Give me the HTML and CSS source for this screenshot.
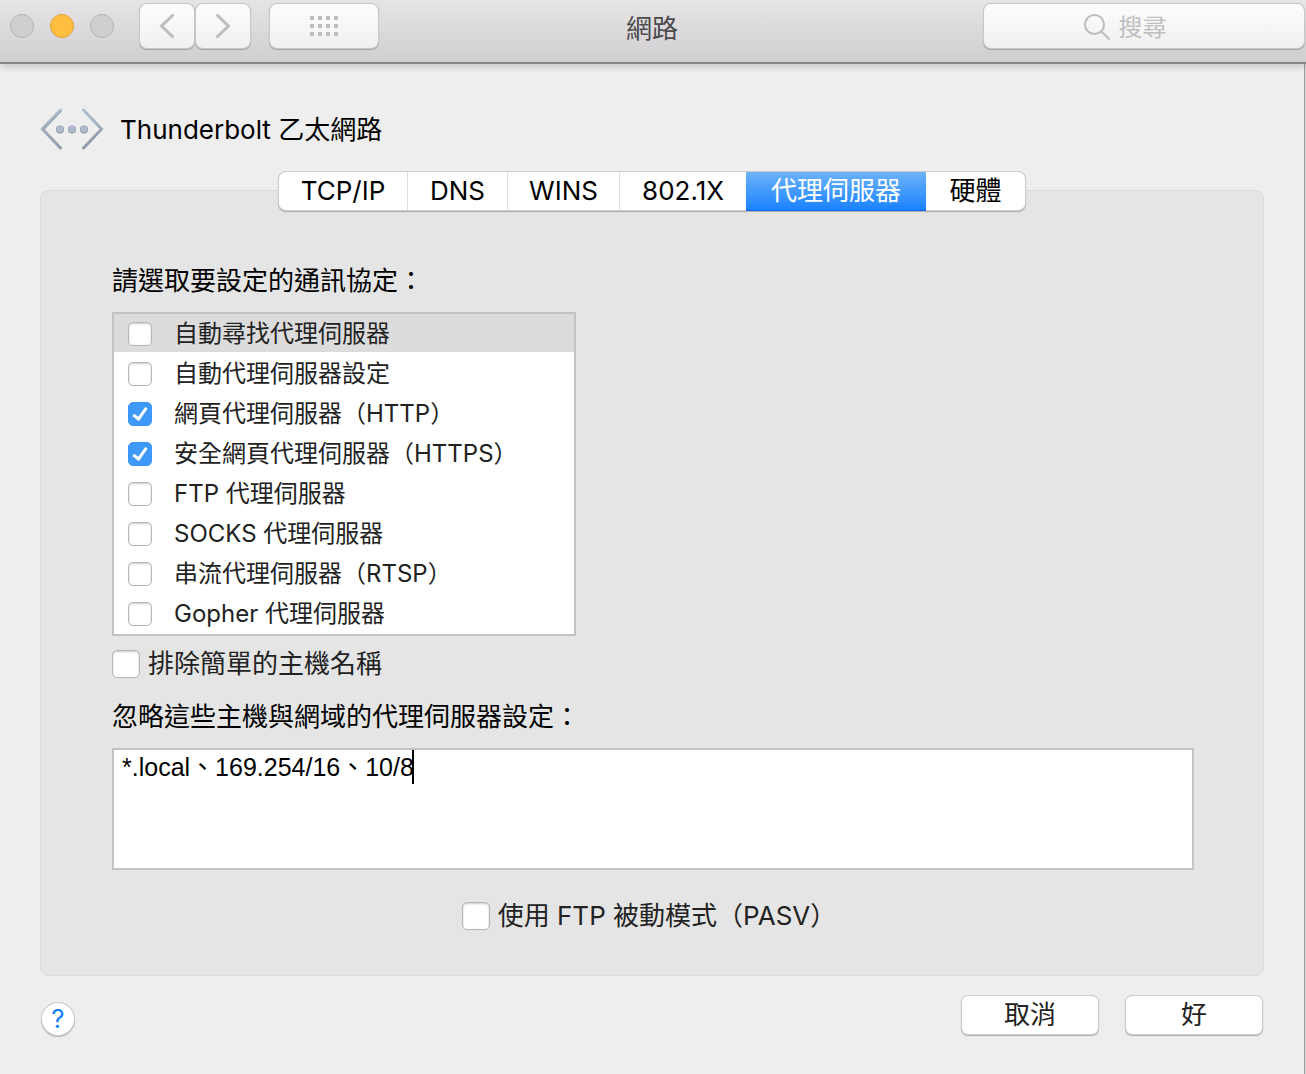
FILE: index.html
```html
<!DOCTYPE html>
<html lang="zh-Hant-TW">
<head>
    <meta charset="UTF-8">
    <meta name="viewport" content="width=device-width, initial-scale=1.0">
    <title>網路</title>
    <link rel="stylesheet" href="styles.css">
</head>
<body>

<header class="titlebar">
    <div class="titlebar-left">
        <div class="lights">
            <button class="light" type="button" aria-label="關閉"></button>
            <button class="light light-min" type="button" aria-label="縮到最小"></button>
            <button class="light" type="button" aria-label="縮放"></button>
        </div>
        <div class="nav">
            <button class="tool-btn" type="button" aria-label="返回">
                <svg width="16" height="26" viewBox="0 0 16 26"><path d="M13.500 2.500L2.500 13L13.500 23.500"/></svg>
            </button>
            <button class="tool-btn" type="button" aria-label="向前">
                <svg width="16" height="26" viewBox="0 0 16 26"><path d="M2.500 2.500L13.500 13L2.500 23.500"/></svg>
            </button>
        </div>
        <button class="tool-btn tool-btn-wide" type="button" aria-label="顯示全部">
            <svg class="dots" width="28" height="20" viewBox="0 0 28 20">
                <path d="M0 0h4v4H0zM8 0h4v4H8zM16 0h4v4h-4zM24 0h4v4h-4zM0 8h4v4H0zM8 8h4v4H8zM16 8h4v4h-4zM24 8h4v4h-4zM0 16h4v4H0zM8 16h4v4H8zM16 16h4v4h-4zM24 16h4v4h-4z"/>
            </svg>
        </button>
    </div>
    <h1>網路</h1>
    <label class="search">
        <svg width="26" height="26" viewBox="0 0 26 26"><circle cx="10.500" cy="10.500" r="9.500"/><path d="M17.200 17.200L25 25"/></svg>
        <input type="search" placeholder="搜尋" aria-label="搜尋">
    </label>
</header>

<main class="window">
    <div class="service">
        <svg width="64" height="42" viewBox="0 0 64 42">
            <defs>
                <linearGradient id="steel" x1="0" y1="0" x2="0" y2="42" gradientUnits="userSpaceOnUse">
                    <stop offset="0" stop-color="#b4bfcd"/>
                    <stop offset="1" stop-color="#8f9bab"/>
                </linearGradient>
            </defs>
            <path d="M20.500 2L2.500 21L20.500 40M43.500 2L61.500 21L43.500 40" fill="none" stroke="url(#steel)" stroke-width="3" stroke-linecap="round"/>
            <path d="M21.500 3L4 21.500M61.500 22L44.500 40" fill="none" stroke="#8791a0" stroke-width="1"/>
            <circle cx="20" cy="21.500" r="4" fill="#8b96a5"/>
            <circle cx="32" cy="21.500" r="4" fill="#8b96a5"/>
            <circle cx="44" cy="21.500" r="4" fill="#8b96a5"/>
            <circle cx="20" cy="21" r="3.500" fill="#afbaca"/>
            <circle cx="32" cy="21" r="3.500" fill="#afbaca"/>
            <circle cx="44" cy="21" r="3.500" fill="#afbaca"/>
        </svg>
        <h2>Thunderbolt 乙太網路</h2>
    </div>

    <div class="tabs" role="tablist">
        <button type="button" role="tab">TCP/IP</button>
        <button type="button" role="tab">DNS</button>
        <button type="button" role="tab">WINS</button>
        <button type="button" role="tab">802.1X</button>
        <button type="button" role="tab" class="active" aria-selected="true">代理伺服器</button>
        <button type="button" role="tab">硬體</button>
    </div>

    <section class="panel">
        <p class="caption">請選取要設定的通訊協定：</p>
        <div class="protocols">
            <label class="selected"><input type="checkbox">自動尋找代理伺服器</label>
            <label><input type="checkbox">自動代理伺服器設定</label>
            <label><input type="checkbox" checked>網頁代理伺服器（HTTP）</label>
            <label><input type="checkbox" checked>安全網頁代理伺服器（HTTPS）</label>
            <label><input type="checkbox">FTP 代理伺服器</label>
            <label><input type="checkbox">SOCKS 代理伺服器</label>
            <label><input type="checkbox">串流代理伺服器（RTSP）</label>
            <label><input type="checkbox">Gopher 代理伺服器</label>
        </div>
        <label class="option"><input type="checkbox">排除簡單的主機名稱</label>

        <label class="caption" for="bypass">忽略這些主機與網域的代理伺服器設定：</label>
        <div class="bypass">
            <textarea id="bypass" spellcheck="false">*.local、169.254/16、10/8</textarea>
            <span class="caret"></span>
        </div>

        <label class="option option-center"><input type="checkbox">使用 FTP 被動模式（PASV）</label>
    </section>

    <footer class="actions">
        <button class="help" type="button" aria-label="輔助說明">?</button>
        <button class="btn" type="button">取消</button>
        <button class="btn" type="button">好</button>
    </footer>
</main>

</body>
</html>
```
FILE: styles.css
```css
* {
    box-sizing: border-box;
}
body {
    margin: 0;
    min-height: 100vh;
    display: flex;
    flex-direction: column;
    background: #d4d4d4;
    color: #000;
    font-family: Inter, "Noto Sans CJK TC", sans-serif;
    font-size: 26px;
    line-height: 40px;
}
button, input, textarea {
    font: inherit;
    color: inherit;
    margin: 0;
    padding: 0;
}
h1, h2, p {
    margin: 0;
    font-size: 26px;
    font-weight: 400;
}

/* Title bar */
.titlebar {
    position: relative;
    display: grid;
    grid-template-columns: 1fr auto 1fr;
    align-items: start;
    height: 64px;
    padding: 4px 2px 0 0;
    border-bottom: 2px solid #858386;
    background: linear-gradient(#e6e4e7, #d0ced1);
    box-shadow: 0 2px 8px rgba(0,0,0,0.2);
}
.titlebar-left {
    display: flex;
    align-items: center;
}
.titlebar h1 {
    padding-top: 5px;
    color: #4b4b4b;
}
.lights {
    display: flex;
    gap: 16px;
    margin: 0 26px 0 10px;
}
.light {
    width: 24px;
    height: 24px;
    border: 1px solid #b4b2b4;
    border-radius: 50%;
    background: #cfcfcf;
}
.light-min {
    border-color: #e0a038;
    background: #ffbe40;
}
.nav {
    display: flex;
    gap: 2px;
    margin-right: 20px;
}
.tool-btn, .search {
    display: flex;
    align-items: center;
    justify-content: center;
    height: 44px;
    border: 0;
    border-radius: 7px;
    background: linear-gradient(#fdfdfd, #f0f0f0);
    box-shadow: 0 0 0 1px #c9c7ca, 0 1px 1px 1px #a5a3a6;
}
.tool-btn {
    width: 54px;
}
.tool-btn-wide {
    width: 108px;
}
.tool-btn svg, .search svg {
    fill: none;
    stroke: #bdbdbd;
    stroke-width: 3;
    stroke-linecap: round;
}
.tool-btn .dots {
    fill: #bdbdbd;
    stroke: none;
}
.search {
    justify-self: end;
    width: 320px;
    padding-top: 2px;
    gap: 9px;
}
.search svg {
    stroke-width: 2;
}
.search input {
    width: 86px;
    height: 42px;
    border: 0;
    outline: 0;
    background: none;
    font-size: 24px;
    appearance: none;
}
.search input::placeholder {
    color: #bfbfbf;
}

/* Sheet */
.window {
    flex: 1;
    margin-right: 1px;
    padding: 44px 40px 0;
    border-right: 1px solid #a0a0a0;
    background: #eee;
}
.service {
    display: flex;
    align-items: center;
    gap: 16px;
    height: 42px;
}
.service h2 {
    padding-top: 2px;
}
.tabs {
    position: relative;
    display: grid;
    grid-template-columns: 128px 100px 112px 127px 180px 99px;
    width: max-content;
    height: 38px;
    margin: 22px auto 0;
    border-radius: 7px;
    background: #fff;
    box-shadow: 0 0 0 1px #ccc, 0 1px 1px 1px #aaa;
}
.tabs button {
    border: 0;
    border-left: 1px solid #dcdcdc;
    background: none;
    line-height: 38px;
}
.tabs button:first-child, .tabs .active, .tabs .active + button {
    border-left: 0;
}
.tabs .active {
    background: linear-gradient(#6cb3fa, #1a82ff);
    box-shadow: 0 1px 0 #1168ee;
    color: #fff;
}
.panel {
    display: flex;
    flex-direction: column;
    align-items: flex-start;
    margin-top: -20px;
    padding: 70px 69px 39px 71px;
    border: 1px solid #dcdcdc;
    border-radius: 8px;
    background: #e5e5e5;
}
.protocols {
    width: 464px;
    max-width: 100%;
    margin-top: 11px;
    border: 2px solid #c3c3c3;
    background: #fff;
}
.protocols label {
    display: flex;
    align-items: center;
    gap: 22px;
    height: 40px;
    padding-left: 14px;
    border-bottom: 2px solid transparent;
    padding-top: 2px;
    background-clip: padding-box;
    color: #222;
    font-size: 24px;
}
.protocols .selected {
    background-color: #dcdcdc;
}
.option {
    display: flex;
    align-items: center;
    gap: 8px;
    margin: 8px 0 13px;
    color: #222;
}

/* Check boxes */
input[type="checkbox"] {
    appearance: none;
    flex: none;
    width: 24px;
    height: 24px;
    border: 1px solid #b5b5b5;
    border-radius: 5px;
    background: #fff;
    box-shadow: inset 0 1px 2px rgba(0,0,0,0.2);
}
.option input[type="checkbox"] {
    width: 28px;
    height: 28px;
}
input[type="checkbox"]:checked {
    border-color: #3d96f7;
    background: #3f99f9;
    box-shadow: none;
}
input[type="checkbox"]:checked::after {
    content: "";
    display: block;
    width: 5px;
    height: 12px;
    margin: 2px 0 0 7px;
    border: solid #fff;
    border-width: 0 3px 3px 0;
    transform: rotate(36deg);
}

.bypass {
    position: relative;
    width: 100%;
    height: 122px;
    margin-top: 11px;
}
.bypass textarea {
    display: block;
    width: 100%;
    height: 100%;
    padding: 0 8px;
    border: 2px solid #c3c3c3;
    outline: 0;
    resize: none;
    background: #fff;
    font-family: "Liberation Sans", "Noto Sans CJK TC", sans-serif;
    font-size: 25px;
    line-height: 34px;
}
.caret {
    position: absolute;
    top: 2px;
    left: 300px;
    width: 2px;
    height: 34px;
    background: #000;
}
.option-center {
    align-self: center;
    margin: 26px 8px 0 0;
}

/* Bottom buttons */
.actions {
    display: flex;
    align-items: center;
    gap: 28px;
    padding: 19px 2px;
}
.btn, .help {
    border: 0;
    background: #fff;
    box-shadow: 0 0 0 1px #ccc, 0 1px 1px 1px #b0b0b0;
}
.btn {
    width: 136px;
    height: 38px;
    border-radius: 6px;
    color: #222;
    line-height: 38px;
}
.help {
    width: 32px;
    height: 32px;
    margin: 8px auto 0 0;
    border-radius: 50%;
    color: #1480ff;
    line-height: 32px;
}
```
